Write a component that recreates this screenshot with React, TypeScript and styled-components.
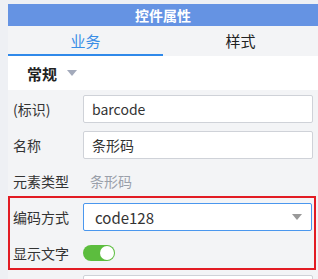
import React, { useState } from 'react';
import styled, { createGlobalStyle } from 'styled-components';

const GlobalStyle = createGlobalStyle`
  html, body {
    margin: 0;
    padding: 0;
    background: #eef0f4;
  }
  body {
    font-family: "Noto Sans CJK SC", "Noto Sans", sans-serif;
  }
`;

const Page = styled.div`
  padding: 4px 0 0 8px;
  height: 279px;
  box-sizing: border-box;
  overflow: hidden;
`;

const Panel = styled.div`
  background: #f3f4f6;
  height: 100%;
`;

const TitleBar = styled.div`
  height: 22px;
  background: #6593e3;
  color: #fff;
  font-size: 14px;
  font-weight: 600;
  display: flex;
  align-items: center;
  justify-content: center;
`;

const Tabs = styled.div`
  display: grid;
  grid-template-columns: 155px 1fr;
  height: 30px;
`;

const Tab = styled.div<{ $active?: boolean }>`
  display: flex;
  align-items: center;
  justify-content: center;
  font-size: 15px;
  color: ${p => (p.$active ? '#3a8ee6' : '#222')};
  border-bottom: 2px solid ${p => (p.$active ? '#2f89ea' : 'transparent')};
  padding-top: 1px;
`;

const SectionHeader = styled.div`
  background: #fff;
  height: 34px;
  display: flex;
  align-items: center;
  padding-left: 19px;
  gap: 10px;
  font-size: 15px;
  font-weight: 700;
  color: #222;
`;

const Caret = styled.span<{ $color?: string }>`
  width: 0;
  height: 0;
  border-left: 5px solid transparent;
  border-right: 5px solid transparent;
  border-top: 6px solid ${p => p.$color || '#a3aabb'};
`;

const Form = styled.div`
  display: flex;
  flex-direction: column;
  gap: 8px;
  padding-top: 5px;
`;

const Row = styled.div<{ $pad?: string }>`
  display: grid;
  grid-template-columns: 70px 1fr;
  align-items: center;
  min-height: 28px;
  padding: ${p => p.$pad || '0 5px 0 5px'};
`;

const Label = styled.span`
  font-size: 14px;
  color: #333;
`;

const Input = styled.div`
  height: 28px;
  box-sizing: border-box;
  background: #fff;
  border: 1px solid #cfd2d8;
  border-radius: 2px;
  display: flex;
  align-items: center;
  padding-left: 8px;
  font-size: 14px;
  color: #333;
`;

const Select = styled(Input)`
  border-color: #4a97ee;
  padding: 0 9px 0 11px;
  justify-content: space-between;
  font-size: 15px;
`;

const StaticText = styled.span`
  font-size: 14px;
  color: #9aa0aa;
  padding-left: 7px;
`;

const Highlight = styled.div`
  display: flex;
  flex-direction: column;
  gap: 8px;
  border: 2px solid #e21b23;
  padding: 5px 0 1px 0;
  margin: -7px 2px -3px 0;
`;

const Switch = styled.button<{ $on: boolean }>`
  width: 32px;
  height: 16px;
  border-radius: 8px;
  border: none;
  padding: 0;
  background: ${p => (p.$on ? '#5cbd3e' : '#c0c4cc')};
  position: relative;
  cursor: pointer;
  &::after {
    content: '';
    position: absolute;
    top: 1px;
    left: ${p => (p.$on ? '17px' : '1px')};
    width: 14px;
    height: 14px;
    border-radius: 50%;
    background: #fff;
  }
`;

export default function App() {
  const [showText, setShowText] = useState(true);
  return (
    <>
      <GlobalStyle />
      <Page>
        <Panel>
          <TitleBar>控件属性</TitleBar>
          <Tabs>
            <Tab $active>业务</Tab>
            <Tab>样式</Tab>
          </Tabs>
          <SectionHeader>
            常规
            <Caret />
          </SectionHeader>
          <Form>
            <Row>
              <Label>(标识)</Label>
              <Input>barcode</Input>
            </Row>
            <Row>
              <Label>名称</Label>
              <Input>条形码</Input>
            </Row>
            <Row>
              <Label>元素类型</Label>
              <StaticText>条形码</StaticText>
            </Row>
            <Highlight>
              <Row $pad="0 2px 0 3px">
                <Label>编码方式</Label>
                <Select>
                  code128
                  <Caret $color="#999" />
                </Select>
              </Row>
              <Row $pad="0 2px 0 3px">
                <Label>显示文字</Label>
                <Switch $on={showText} onClick={() => setShowText(!showText)} />
              </Row>
            </Highlight>
            <Row>
              <Label />
              <Input />
            </Row>
          </Form>
        </Panel>
      </Page>
    </>
  );
}
